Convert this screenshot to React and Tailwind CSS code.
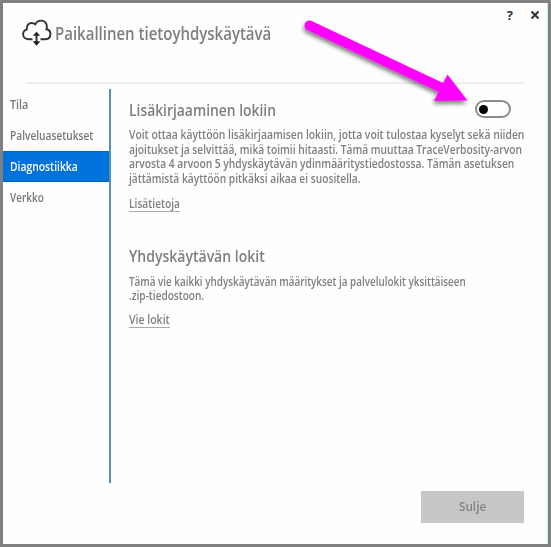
import { useLayoutEffect, useRef, useState } from 'react';

const navItems = [
  { label: 'Tila', width: 18, className: 'h-[31px] text-[#777]' },
  { label: 'Palveluasetukset', width: 83, className: 'h-[31px] text-[#777]' },
  { label: 'Diagnostiikka', width: 68, className: 'h-[31px] bg-[#0072db] text-white border-y border-[#0a63b5]' },
  { label: 'Verkko', width: 34, className: 'h-[31px] text-[#777]' },
];

// One line of text, narrowed or widened to take exactly the given width.
function Line({ width, children }) {
  const ref = useRef(null);
  const [scale, setScale] = useState(1);
  useLayoutEffect(() => {
    setScale(width / ref.current.offsetWidth);
  }, [width]);
  return (
    <span className="block whitespace-nowrap" style={{ width }}>
      <span ref={ref} className="block w-max origin-left" style={{ transform: `scaleX(${scale})` }}>{children}</span>
    </span>
  );
}

function CloudIcon() {
  return (
    <svg className="h-[28px] w-[30px] shrink-0" viewBox="0 0 30 28" fill="none" stroke="#303030" strokeWidth="1.9">
      <path d="M10.500 20.200H7C3.700 20.200 1.100 18.300 1.100 15.200C1.100 12.600 3 10.900 4.800 10.300C4.300 6.300 6.900 3.900 9.800 4C11.500 4 12.500 4.600 13.300 5.300C14.500 2.700 16.400 1.600 19 1.600C22.800 1.600 25 4.200 24.900 8.300C24.900 9 24.700 9.700 24.500 10.200C27 10.500 28.400 12.700 28.400 15C28.400 18 26.500 20.100 23.500 20.200H18.500" />
      <path d="M14.500 15V24" strokeWidth="2" />
      <path d="M10.900 16.700L14.500 12.700L18.100 16.700ZM10.700 22.300L14.500 26.800L18.300 22.300Z" fill="#202020" stroke="none" />
    </svg>
  );
}

function Toggle() {
  return (
    <button className="mt-[-2px] flex h-[18px] w-[36px] items-center rounded-full border-2 border-[#8c8c8c] bg-white pl-[2px]">
      <span className="size-[9px] rounded-full bg-black" />
    </button>
  );
}

function Arrow() {
  return (
    <svg className="pointer-events-none h-[547px] w-[551px]" viewBox="0 0 551 547">
      <defs>
        <filter id="shadow" x="-20%" y="-20%" width="140%" height="150%">
          <feDropShadow dx="-1" dy="3" stdDeviation="2" floodColor="#000" floodOpacity="0.5" />
        </filter>
      </defs>
      <g filter="url(#shadow)" fill="#ff00ff">
        <path d="M309.500 25.500L442 88" stroke="#ff00ff" strokeWidth="10" strokeLinecap="round" />
        <path d="M447.500 74.500L467.500 100.500L434 101Z" />
      </g>
    </svg>
  );
}

export default function App() {
  return (
    <div className="relative flex h-[547px] w-[551px] flex-col overflow-hidden border-[3px] border-[#808080] bg-[#fefefe] font-['Open_Sans','Noto_Sans',sans-serif] font-semibold text-[#7f7f7f]">
      <div className="flex h-[79px] justify-between pl-[19px] pr-[8px]">
        <div className="flex items-start gap-[3px] pt-[16px]">
          <CloudIcon />
          <h1 className="pt-px text-[17.5px] leading-[26px]"><Line width={216}>Paikallinen tietoyhdyskäytävä</Line></h1>
        </div>
        <div className="flex h-[24px] items-center gap-[17px] text-[#333]">
          <span className="text-[13px] leading-none font-bold">?</span>
          <svg className="size-[10px]" viewBox="0 0 10 10" stroke="#333" strokeWidth="2"><path d="M1.500 1.500L8.500 8.500M8.500 1.500L1.500 8.500" /></svg>
        </div>
      </div>
      <hr className="ml-[23px] w-[498px] border-t-2 border-[#ededed]" />
      <div className="flex pt-[5px]">
        <nav className="flex h-[394px] w-[108px] flex-col border-r-2 border-[#5192b7]">
          {navItems.map((item) => (
            <a key={item.label} className={`flex shrink-0 items-center pl-[7px] pt-px text-[12px] ${item.className}`}><Line width={item.width}>{item.label}</Line></a>
          ))}
        </nav>
        <main className="flex w-[412px] flex-col items-start pt-[9px] pl-[18px] text-[11.8px] leading-[14.7px]">
          <div className="flex w-[382px] items-center justify-between">
            <h2 className="text-[16.5px] leading-[24px]"><Line width={147}>Lisäkirjaaminen lokiin</Line></h2>
            <Toggle />
          </div>
          <div className="pt-[5px]">
            <Line width={395}>Voit ottaa käyttöön lisäkirjaamisen lokiin, jotta voit tulostaa kyselyt sekä niiden</Line>
            <Line width={393}>ajoitukset ja selvittää, mikä toimii hitaasti. Tämä muuttaa TraceVerbosity-arvon</Line>
            <Line width={385}>arvosta 4 arvoon 5 yhdyskäytävän ydinmääritystiedostossa. Tämän asetuksen</Line>
            <Line width={232}>jättämistä käyttöön pitkäksi aikaa ei suositella.</Line>
          </div>
          <a className="mt-[10px] border-b border-[#aaa]"><Line width={51}>Lisätietoja</Line></a>
          <h2 className="mt-[32px] text-[16.5px] leading-[24px]"><Line width={136}>Yhdyskäytävän lokit</Line></h2>
          <div className="pt-[6px]">
            <Line width={337}>Tämä vie kaikki yhdyskäytävän määritykset ja palvelulokit yksittäiseen</Line>
            <Line width={75}>.zip-tiedostoon.</Line>
          </div>
          <a className="mt-[9px] border-b border-[#aaa]"><Line width={41}>Vie lokit</Line></a>
        </main>
      </div>
      <footer className="mt-[8px] flex justify-end pr-[24px]">
        <button className="flex h-[32px] w-[103px] items-center justify-center bg-[#c8c7c6] text-[13px] text-[#828282]"><Line width={27}>Sulje</Line></button>
      </footer>
      <div className="absolute top-0 right-0 h-full w-px bg-[#c5edf5]" />
      <div className="absolute -top-[3px] -left-[3px]"><Arrow /></div>
    </div>
  );
}
